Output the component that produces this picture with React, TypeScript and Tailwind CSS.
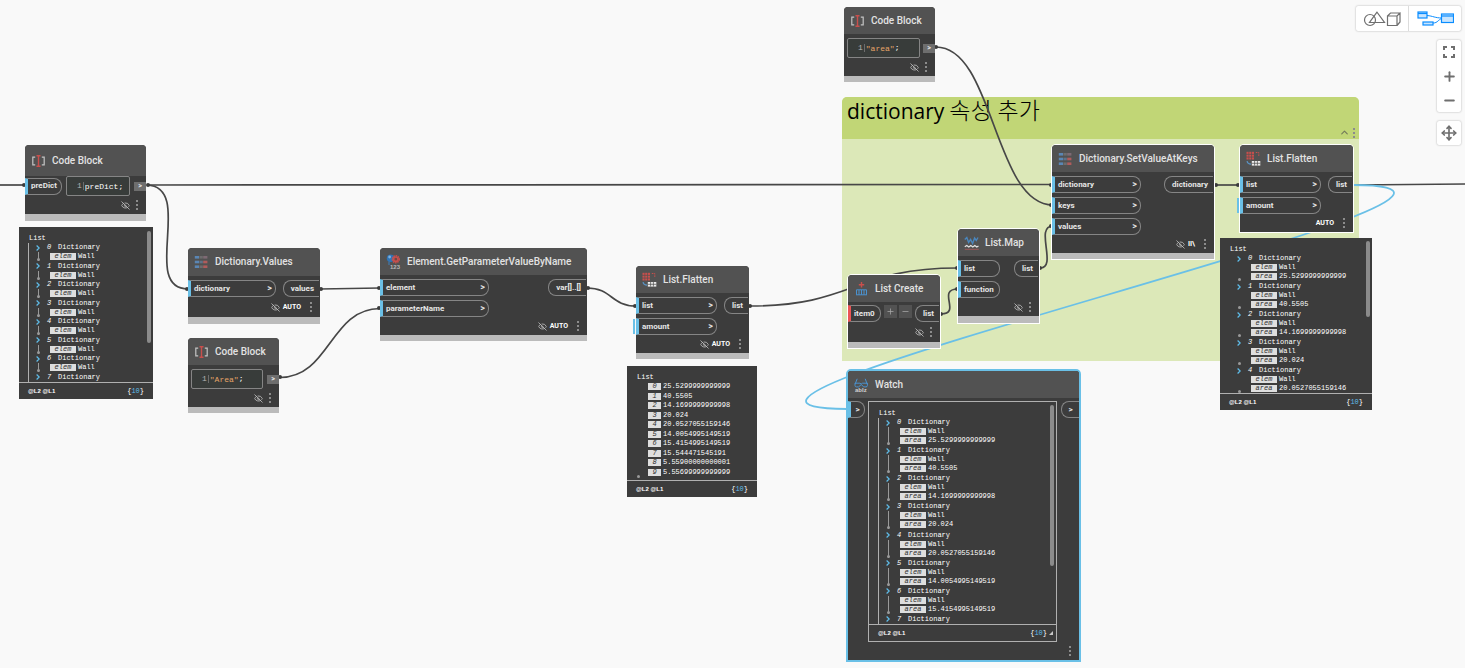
import type { ReactNode } from "react";
import { EyeOff, ChevronUp, Plus, Minus, Move } from "lucide-react";

/* ---------- icons ---------- */

function CodeIcon() {
  return (
    <svg viewBox="0 0 16 16" className="size-4 shrink-0" fill="none" aria-hidden="true">
      <path d="M4.200 4.200H1.800v7.600h2.400M10.800 4.200h2.400v7.600h-2.400" stroke="#c4c4c4" strokeWidth="1.200" />
      <path d="M5.500 2.700h4M5.500 13.300h4M7.500 2.700v10.600" stroke="#c94f4c" strokeWidth="1.400" />
    </svg>
  );
}

function DictionaryIcon() {
  return (
    <svg viewBox="0 0 16 16" className="size-4 shrink-0" aria-hidden="true">
      {[2, 6.7, 11.4].map((y, i) => (
        <g key={y}>
          <rect x="0.8" y={y} width="4.200" height="2.600" fill="#5a86b4" />
          <rect x="5.400" y={y} width="3.400" height="2.600" fill={i === 1 ? "#5f7388" : "#6d6d6d"} />
          <rect x="9.200" y={y} width="4.200" height="2.600" fill={i === 0 ? "#7e6a74" : "#b05c5c"} />
        </g>
      ))}
    </svg>
  );
}

function FlattenIcon() {
  return (
    <svg viewBox="0 0 16 16" className="size-4 shrink-0" fill="none" aria-hidden="true">
      <g fill="#c94f4c">
        {[0.5, 3.2, 5.9].map((x) =>
          [0.8, 3.6, 6.4].map((y) => <rect key={`${x}-${y}`} x={x} y={y} width="2.1" height="2.1" />)
        )}
      </g>
      <path d="M9.800 1.500h3v3.500" stroke="#c94f4c" strokeWidth="1" strokeDasharray="1.600 0.800" />
      <path d="M1 10.200c.4 2 1.600 3 4 3" stroke="#5a93c4" strokeWidth="1.200" />
      <rect x="5.800" y="10" width="8.500" height="4.600" fill="#ececec" />
      <path d="M5.800 12.300h8.500M8.600 10v4.600M11.400 10v4.600" stroke="#4a4a4a" strokeWidth="0.700" />
    </svg>
  );
}

function ElementIcon() {
  return (
    <svg viewBox="0 0 16 16" className="size-4 shrink-0" aria-hidden="true">
      <circle cx="4.600" cy="4.200" r="3.800" fill="#2f74b5" />
      <circle cx="3.600" cy="3" r="1.400" fill="#7fb2e0" />
      <circle cx="9.800" cy="5.200" r="3.400" fill="none" stroke="#c94f4c" strokeWidth="1.600" strokeDasharray="1.500 0.700" />
      <circle cx="9.800" cy="5.200" r="2.200" fill="#6b4a4a" stroke="#c94f4c" strokeWidth="1.600" />
      <path d="M3 7.500v3.500" stroke="#3f7fba" strokeWidth="1" />
      <text x="4" y="15.400" fontSize="6" fontFamily="Liberation Sans, sans-serif" fill="#b9b9b9">123</text>
    </svg>
  );
}

function CreateIcon() {
  return (
    <svg viewBox="0 0 16 16" className="size-4 shrink-0" fill="none" aria-hidden="true">
      <path d="M7.500 1v5.400M4.800 3.700h5.400" stroke="#c94f4c" strokeWidth="1.400" />
      <path d="M2.500 13.800V8.800h10v5M5 9v4.800M7.500 9v4.800M10 9v4.800M2 13.800h11" stroke="#4a92cf" strokeWidth="1" />
    </svg>
  );
}

function MapIcon() {
  return (
    <svg viewBox="0 0 16 16" className="size-4 shrink-0" fill="none" aria-hidden="true">
      <path d="M.8 4.500l2-2 1.800 5 2-3 2 4 2-5.500 1.700 2.500 1.700-3" stroke="#4a86bd" strokeWidth="1.400" />
      <path d="M.8 11.800l2-1.300 2 1.500 2-1.500 2 1.500 2-1.500 2 1.500 1.700-1" stroke="#e4e4e4" strokeWidth="1.200" />
      <path d="M.8 14.300h14" stroke="#b05c5c" strokeWidth="0.800" />
    </svg>
  );
}

function WatchIcon() {
  return (
    <svg viewBox="0 0 16 16" className="size-4 shrink-0" fill="none" aria-hidden="true">
      <path d="M1.200 7L3.200 1.800M13.200 7L11.200 1.800" stroke="#4a92cf" strokeWidth="1" />
      <path d="M1 6.200h4.900l1.300.8 1.300-.8h4.900v2.300c0 .9-.6 1.400-1.400 1.400H9.800L7.200 7.600 4.600 9.900H2.400C1.600 9.900 1 9.400 1 8.500z" stroke="#4a92cf" strokeWidth="1" />
      <text x="1" y="15" fontSize="6" fontFamily="Liberation Sans, sans-serif" fill="#d0d0d0">abIz</text>
    </svg>
  );
}

function GeometryIcon() {
  return (
    <svg viewBox="0 0 38 16" className="h-4 w-[38px]" fill="none" stroke="#6f6f6f" strokeWidth="1.200" aria-hidden="true">
      <circle cx="7" cy="9" r="5.500" />
      <path d="M14 1.200L6.500 11.500h15z" />
      <path d="M24.500 5h9.500v9.500h-9.500zM24.500 5l3-3H37l-3 3M37 2v9l-3 3.500" />
    </svg>
  );
}

function GraphIcon() {
  return (
    <svg viewBox="0 0 38 16" className="h-4 w-[38px]" fill="none" stroke="#0a8dff" aria-hidden="true">
      <path d="M11 4.500c6 .5 8 2.500 15 2.500M17 12c5 0 5-3.500 9-4.500" strokeWidth="1" />
      <rect x="2" y="1" width="9" height="6" fill="#c8e5ff" strokeWidth="1.200" />
      <path d="M2 2.500h9" strokeWidth="1.200" />
      <rect x="7" y="11" width="10" height="3" fill="#c8e5ff" strokeWidth="1.200" />
      <rect x="25.500" y="3" width="12" height="8.500" fill="#c8e5ff" strokeWidth="1.200" />
      <path d="M25.500 5h12" strokeWidth="1.200" />
    </svg>
  );
}

function FitIcon() {
  return (
    <svg viewBox="0 0 14 14" className="size-3.5" fill="none" stroke="#6f6f6f" strokeWidth="2" aria-hidden="true">
      <path d="M2 5V2h3M9 2h3v3M12 9v3H9M5 12H2V9" />
    </svg>
  );
}

/* ---------- node parts ---------- */

function Dots() {
  return (
    <button type="button" aria-label="Node menu" className="flex w-[2px] flex-col items-center gap-[2px]">
      <span className="size-[2px] bg-[#8c8c8c]" />
      <span className="size-[2px] bg-[#8c8c8c]" />
      <span className="size-[2px] bg-[#8c8c8c]" />
    </button>
  );
}

type InPortProps = { label: string; chevron?: boolean; bar?: string; extra?: boolean };

function InPort({ label, chevron = true, bar = "border-l-[#6ac0e7]", extra = false }: InPortProps) {
  return (
    <div
      className={`relative flex h-[17px] items-center justify-between rounded-r-[8px] border border-l-[3px] border-[#858585] pr-[3px] pl-[3px] ${bar}`}
    >
      {extra && <span className="absolute -left-[6px] h-[15px] w-[2px] bg-[#6ac0e7]" />}
      <span>{label}</span>
      {chevron && <span className="text-[9px]">&gt;</span>}
    </div>
  );
}

function OutPort({ label }: { label: string }) {
  return (
    <div className="mr-px flex h-[17px] items-center rounded-l-[8px] border border-r-0 border-[#858585] pr-[5px] pl-[7px]">
      {label}
    </div>
  );
}

type NodeProps = {
  className: string;
  icon: ReactNode;
  title: string;
  children: ReactNode;
  head?: string;
  foot?: string;
  status?: string;
  eye?: boolean;
  base?: string;
};

function Node({
  className,
  icon,
  title,
  children,
  head = "h-[27px]",
  foot = "h-[18px]",
  status,
  eye = true,
  base = "h-[6px]",
}: NodeProps) {
  return (
    <section
      className={`absolute flex flex-col rounded-t-[4px] bg-[#3c3c3c] font-['Roboto',sans-serif] text-[8px] leading-none font-bold text-[#e6e6e6] ${className}`}
    >
      <header className={`flex shrink-0 items-center gap-[5px] rounded-t-[4px] bg-[#525252] pl-[6px] ${head}`}>
        {icon}
        <h2 className="text-[10px] font-medium whitespace-nowrap text-[#e2e2e2]">{title}</h2>
      </header>
      {children}
      <footer className={`flex items-center justify-end pr-2 ${status ? "gap-[9px]" : "gap-[6px]"} ${foot}`}>
        <span className="flex items-center gap-[3px] text-[7px] text-white">
          {eye && <EyeOff size={9} strokeWidth={2} className="text-[#c8c8c8]" />}
          {status}
        </span>
        <Dots />
      </footer>
      <div className={`bg-[#bbbbbb] ${base}`} />
    </section>
  );
}

function Ports({ width, inputs, output }: { width: string; inputs: InPortProps[]; output: string }) {
  return (
    <div className="flex items-start justify-between pt-1">
      <div className={`flex flex-col gap-1 ${width}`}>
        {inputs.map((p) => (
          <InPort key={p.label} {...p} />
        ))}
      </div>
      <OutPort label={output} />
    </div>
  );
}

function CodeField({ code, tail, width, tone }: { code: string; tail?: string; width: string; tone: string }) {
  return (
    <label
      className={`flex h-5 items-center rounded-[2px] border border-[#858585] bg-[#383c3a] pl-[10px] font-['Liberation_Mono',monospace] text-[8px] font-normal text-white ${width}`}
    >
      <span className="mr-px border-r border-[#6d6d6d] pr-px text-[#b5b5b5]">1</span>
      <input aria-label="Code" defaultValue={code} className={`field-sizing-content outline-none ${tone}`} />
      {tail}
    </label>
  );
}

function CodeOut() {
  return <span className="flex h-[9px] w-3 items-center justify-center bg-[#6e6e6e] text-[7px]">&gt;</span>;
}

/* ---------- value previews ---------- */

type Entry = { id: number; rows: [string, string][] };

function Key({ text, width }: { text: string; width: string }) {
  return (
    <span className={`flex h-[7px] items-center justify-center bg-[#dedede] text-[7px] leading-none text-[#2f2f2f] italic ${width}`}>
      {text}
    </span>
  );
}

function DictionaryEntry({ entry, line }: { entry: Entry; line: boolean }) {
  return (
    <li>
      <button type="button" className="flex h-[9px] items-center pl-[7px]">
        <svg viewBox="0 0 4 6" className="h-[6px] w-1" fill="none" stroke="#5fbdea" strokeWidth="1.200" aria-hidden="true">
          <path d="M.6.5L3.200 3 .6 5.500" />
        </svg>
        <span className="w-[18px] pl-[7px] text-left italic">{entry.id}</span>
        <span>Dictionary</span>
      </button>
      {entry.rows.length > 0 && (
        <div
          className={`relative ml-[9px] flex flex-col gap-[2px] border-l py-px pl-[11px] ${line ? "border-[#9a9a9a]" : "border-transparent"}`}
        >
          {entry.rows.map(([k, v]) => (
            <div key={k} className="flex h-[7px] items-center gap-[2px]">
              <Key text={k} width="w-[26px]" />
              {v}
            </div>
          ))}
          <span className="absolute bottom-0 -left-[2px] size-[3px] rounded-full bg-[#9a9a9a]" />
        </div>
      )}
    </li>
  );
}

function PreviewFooter({ grip = false }: { grip?: boolean }) {
  return (
    <div className="flex h-[17px] shrink-0 items-center justify-between border-t border-[#b0b0b0] pr-[9px] pl-[9px]">
      <span className="font-['Liberation_Sans',sans-serif] text-[6px] font-bold">@L2 @L1</span>
      <span className="flex items-center gap-[2px]">
        <span>
          {"{"}
          <span className="text-[#5fbdea]">10</span>
          {"}"}
        </span>
        {grip && (
          <svg viewBox="0 0 4 4" className="-mr-[6px] size-1" fill="#c8c8c8" aria-hidden="true">
            <path d="M4 0v4H0z" />
          </svg>
        )}
      </span>
    </div>
  );
}

type PreviewProps = {
  className: string;
  list: string;
  thumb?: string;
  line?: boolean;
  grip?: boolean;
  children: ReactNode;
};

function Preview({ className, list, thumb, line = false, grip, children }: PreviewProps) {
  return (
    <div
      className={`flex flex-col bg-[#3c3c3c] font-['Liberation_Mono',monospace] text-[7px] leading-none text-white ${className}`}
    >
      <div className="min-h-0 flex-1 overflow-hidden pt-[6px] pl-[9px]">
        <p className="flex h-[10px] items-center pl-px">List</p>
        <ul className={`flex flex-col justify-between border-l ${line ? "border-[#b0b0b0]" : "border-transparent"} ${list}`}>
          {children}
        </ul>
      </div>
      {thumb && <span className={`absolute right-[2px] w-1 rounded-full bg-[#8b8b8b] ${thumb}`} />}
      <PreviewFooter grip={grip} />
    </div>
  );
}

const values = [
  "25.5299999999999",
  "40.5505",
  "14.1699999999998",
  "20.024",
  "20.0527055159146",
  "14.0054995149519",
  "15.4154995149519",
  "15.544471545191",
  "5.55900000000001",
  "5.55699999999999",
];

const elements: Entry[] = [
  ...values.slice(0, 7).map((_, id): Entry => ({ id, rows: [["elem", "Wall"]] })),
  { id: 7, rows: [] },
];

const records: Entry[] = [
  ...values.slice(0, 7).map((v, id): Entry => ({ id, rows: [["elem", "Wall"], ["area", v]] })),
  { id: 7, rows: [] },
];

/* ---------- wires ---------- */

const wires = [
  "M0 185H25",
  "M147 185L1053 184.500",
  "M147 185C195 187 140 289 188 289",
  "M320 289L380 288",
  "M280 377.500C330 377.500 330 308.500 380 308.500",
  "M587 288C612 288 611 306 636 306",
  "M750 306C854 306 854 268 958 268",
  "M941 314C962 314 936 289 958 289",
  "M1040 268C1058 268 1034 226 1053 226",
  "M936 47C994 47 994 205 1053 205",
  "M1215 185H1239",
  "M1353 185L1465 184",
];

const ends: [number, number][] = [
  [24, 185], [148, 185], [187, 289], [321, 289], [379, 288], [379, 308], [280, 377], [588, 288], [635, 306],
  [750, 306], [957, 268], [957, 289], [941, 314], [1040, 268], [1051, 226], [1051, 205], [1051, 185], [936, 47],
  [1216, 185], [1238, 185],
];

function Wires() {
  return (
    <svg className="pointer-events-none absolute top-0 left-0 h-[668px] w-[1465px]" fill="none" aria-hidden="true">
      <g stroke="#474747" strokeWidth="1.700">
        {wires.map((d) => (
          <path key={d} d={d} />
        ))}
      </g>
      <path d="M1353 185C1606 185 594 409 847 409" stroke="#6ac0e7" strokeWidth="1.800" />
      <g fill="#3c3c3c">
        {ends.map(([x, y]) => (
          <circle key={`${x}-${y}`} cx={x} cy={y} r="2" />
        ))}
      </g>
    </svg>
  );
}

/* ---------- page ---------- */

export default function App() {
  return (
    <main className="relative min-h-screen w-full overflow-hidden bg-[#f9f9f9]">
      <section className="absolute top-[97px] left-[842px] flex h-[264px] w-[517px] flex-col rounded-t-[5px] bg-[#dce8b8]">
        <header className="flex h-[42px] justify-between rounded-t-[5px] bg-[#c1d676] pl-[5px]">
          <h1 className="flex items-baseline gap-[5px] font-['Open_Sans','Noto_Sans_CJK_KR',sans-serif] text-[21px] leading-[27px] font-normal text-black">
            <span>dictionary</span>
            <span className="text-[23px] font-light">속성 추가</span>
          </h1>
          <div className="flex items-center gap-[3px] self-end pr-1 pb-px">
            <button type="button" aria-label="Collapse group">
              <ChevronUp size={11} strokeWidth={2.5} className="text-[#737a5a]" />
            </button>
            <Dots />
          </div>
        </header>
      </section>

      <Wires />

      <Node className="top-[145px] left-[25px] w-[121px]" icon={<CodeIcon />} title="Code Block" head="h-[31px]" base="h-[7px]">
        <div className="flex items-center justify-between">
          <div className="w-[37px]">
            <InPort label="preDict" chevron={false} />
          </div>
          <CodeField code="preDict;" width="w-16" tone="text-white" />
          <CodeOut />
        </div>
      </Node>

      <Preview className="absolute top-[227px] left-[19px] h-[172px] w-[134px]" list="h-[139px]" thumb="top-[4px] h-[112px]" line>
        {elements.map((e) => (
          <DictionaryEntry key={e.id} entry={e} line />
        ))}
      </Preview>

      <Node
        className="top-[248px] left-[188px] w-[132px]"
        icon={<DictionaryIcon />}
        title="Dictionary.Values"
        head="h-7"
        foot="h-5"
        status="AUTO"
        base="h-[7px]"
      >
        <Ports width="w-[88px]" inputs={[{ label: "dictionary" }]} output="values" />
      </Node>

      <Node className="top-[338px] left-[188px] w-[91px]" icon={<CodeIcon />} title="Code Block">
        <div className="flex items-center justify-between pt-1 pl-[3px]">
          <CodeField code={'"Area"'} tail=";" width="w-[72px]" tone="text-[#e6a468]" />
          <CodeOut />
        </div>
      </Node>

      <Node
        className="top-[248px] left-[380px] w-[207px]"
        icon={<ElementIcon />}
        title="Element.GetParameterValueByName"
        status="AUTO"
      >
        <Ports width="w-[109px]" inputs={[{ label: "element" }, { label: "parameterName" }]} output="var[]..[]" />
      </Node>

      <Node className="top-[266px] left-[636px] w-[113px]" icon={<FlattenIcon />} title="List.Flatten" status="AUTO">
        <Ports width="w-[81px]" inputs={[{ label: "list" }, { label: "amount", extra: true }]} output="list" />
      </Node>

      <Preview className="absolute top-[366px] left-[627px] h-[131px] w-[130px]" list="relative h-[95px]">
        {values.map((v, i) => (
          <li key={v} className="flex h-[9px] items-center gap-[2px] pl-[11px]">
            <Key text={String(i)} width="w-[13px]" />
            {v}
            {i === values.length - 1 && (
              <span className="absolute -bottom-px left-0 size-[3px] rounded-full bg-[#9a9a9a]" />
            )}
          </li>
        ))}
      </Preview>

      <Node className="top-[7px] left-[844px] w-[91px]" icon={<CodeIcon />} title="Code Block">
        <div className="flex items-center justify-between pt-1 pl-[3px]">
          <CodeField code={'"area"'} tail=";" width="w-[73px]" tone="text-[#e6a468]" />
          <CodeOut />
        </div>
      </Node>

      <Node className="top-[275px] left-[848px] w-[92px] ring-1 ring-white" icon={<CreateIcon />} title="List Create" foot="h-5">
        <div className="flex items-start justify-between pt-[3px]">
          <div className="w-[33px]">
            <InPort label="item0" chevron={false} bar="border-l-[#eb5555]" />
          </div>
          <div className="flex gap-[2px] text-[#a8a8a8]">
            <button type="button" aria-label="Add item" className="flex size-[13px] items-center justify-center bg-[#525252]">
              <Plus size={9} />
            </button>
            <button type="button" aria-label="Remove item" className="flex size-[13px] items-center justify-center bg-[#525252]">
              <Minus size={9} />
            </button>
          </div>
          <OutPort label="list" />
        </div>
      </Node>

      <Node className="top-[229px] left-[958px] w-[81px] ring-1 ring-white" icon={<MapIcon />} title="List.Map" base="h-[7px]">
        <Ports width="w-[42px]" inputs={[{ label: "list", chevron: false }, { label: "function", chevron: false }]} output="list" />
      </Node>

      <Node
        className="top-[145px] left-[1052px] w-[162px] ring-1 ring-white"
        icon={<DictionaryIcon />}
        title="Dictionary.SetValueAtKeys"
        status={"II\\"}
      >
        <Ports width="w-[89px]" inputs={[{ label: "dictionary" }, { label: "keys" }, { label: "values" }]} output="dictionary" />
      </Node>

      <Node
        className="top-[145px] left-[1240px] w-[113px] ring-1 ring-white"
        icon={<FlattenIcon />}
        title="List.Flatten"
        status="AUTO"
        eye={false}
        base="h-0"
      >
        <Ports width="w-[81px]" inputs={[{ label: "list" }, { label: "amount", extra: true }]} output="list" />
      </Node>

      <Preview className="absolute top-[238px] left-[1220px] h-[172px] w-[152px]" list="h-[139px]" thumb="top-[3px] h-[76px]">
        {records.slice(0, 5).map((e) => (
          <DictionaryEntry key={e.id} entry={e} line={false} />
        ))}
      </Preview>

      <section className="absolute top-[369px] left-[846px] flex w-[235px] flex-col rounded-t-[5px] border-2 border-[#6ac0e7] bg-[#3c3c3c] font-['Roboto',sans-serif] text-[8px] leading-none font-bold text-[#e6e6e6]">
        <header className="flex h-[27px] items-center gap-[5px] rounded-t-[3px] bg-[#525252] pl-[6px]">
          <WatchIcon />
          <h2 className="text-[10px] font-medium text-[#e2e2e2]">Watch</h2>
        </header>
        <div className="flex items-start gap-[3px] pt-[3px]">
          <div className="flex h-[17px] w-[17px] items-center justify-center rounded-r-[8px] border border-l-[3px] border-[#858585] border-l-[#6ac0e7]">
            &gt;
          </div>
          <Preview
            className="relative h-[241px] w-[189px] border border-[#b0b0b0] font-normal"
            list="h-[206px]"
            thumb="top-[3px] h-[161px]"
            line
            grip
          >
            {records.map((e) => (
              <DictionaryEntry key={e.id} entry={e} line />
            ))}
          </Preview>
          <div className="ml-auto flex h-[17px] w-[18px] items-center justify-center rounded-l-[8px] border border-r-0 border-[#858585]">
            &gt;
          </div>
        </div>
        <footer className="flex h-[18px] items-center justify-end pr-2">
          <Dots />
        </footer>
      </section>

      <nav className="absolute top-[6px] right-[4px] flex flex-col items-end gap-[9px]">
        <div className="flex h-[25px] divide-x divide-[#dcdcdc] rounded-[2px] bg-white shadow-[0_0_2px_#a8a8a8]">
          <button type="button" aria-label="3D preview" className="flex w-[53px] items-center justify-center">
            <GeometryIcon />
          </button>
          <button type="button" aria-label="Graph view" className="flex w-[52px] items-center justify-center">
            <GraphIcon />
          </button>
        </div>
        <div className="flex w-6 flex-col rounded-[2px] bg-white text-[#6f6f6f] shadow-[0_0_2px_#a8a8a8]">
          <button type="button" aria-label="Zoom to fit" className="flex h-6 items-center justify-center">
            <FitIcon />
          </button>
          <button type="button" aria-label="Zoom in" className="flex h-6 items-center justify-center">
            <Plus size={15} strokeWidth={3} />
          </button>
          <button type="button" aria-label="Zoom out" className="flex h-6 items-center justify-center">
            <Minus size={15} strokeWidth={3} />
          </button>
        </div>
        <button
          type="button"
          aria-label="Pan"
          className="flex size-6 items-center justify-center rounded-[2px] bg-white text-[#6f6f6f] shadow-[0_0_2px_#a8a8a8]"
        >
          <Move size={16} strokeWidth={2.5} />
        </button>
      </nav>
    </main>
  );
}
